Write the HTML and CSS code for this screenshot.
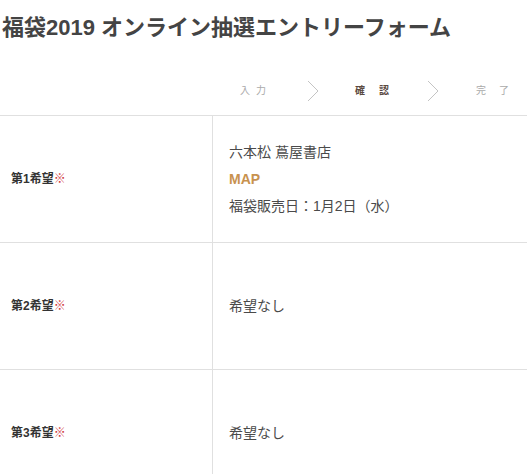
FILE: index.html
```html
<!DOCTYPE html>
<html lang="ja">
<head>
<meta charset="utf-8">
<title>福袋2019 オンライン抽選エントリーフォーム</title>
<link rel="stylesheet" href="styles.css">
</head>
<body>
<h1 class="title">福袋2019 オンライン抽選エントリーフォーム</h1>
<div class="steps">
  <span class="step step-input">入力</span>
  <svg class="chev chev-1" width="12" height="22" viewBox="0 0 12 22"><polyline points="1,1 11,11 1,21" fill="none" stroke="#c4c4c4" stroke-width="1"/></svg>
  <span class="step step-current">確認</span>
  <svg class="chev chev-2" width="12" height="22" viewBox="0 0 12 22"><polyline points="1,1 11,11 1,21" fill="none" stroke="#c4c4c4" stroke-width="1"/></svg>
  <span class="step step-done">完了</span>
</div>
<div class="entries">
  <div class="row">
    <div class="label">第1希望<span class="req">※</span></div>
    <div class="value">
      <div class="line">六本松 蔦屋書店</div>
      <div class="line map">MAP</div>
      <div class="line">福袋販売日：1月2日（水）</div>
    </div>
  </div>
  <div class="row">
    <div class="label">第2希望<span class="req">※</span></div>
    <div class="value">
      <div class="line">希望なし</div>
    </div>
  </div>
  <div class="row">
    <div class="label">第3希望<span class="req">※</span></div>
    <div class="value">
      <div class="line">希望なし</div>
    </div>
  </div>
</div>
</body>
</html>
```
FILE: styles.css
```css
html, body {
  margin: 0;
  padding: 0;
  background: #fff;
}
body {
  font-family: "Liberation Sans", Arial, "Noto Sans CJK JP", sans-serif;
  color: #444;
  width: 527px;
  overflow: hidden;
}
.title {
  margin: 0;
  padding: 16px 0 0 2px;
  font-size: 22px;
  line-height: 24px;
  font-weight: bold;
  color: #444;
  white-space: nowrap;
}
.steps {
  display: flex;
  align-items: center;
  height: 22px;
  margin-top: 40px;
  padding-left: 240px;
}
.step {
  font-size: 10px;
  line-height: 12px;
  color: #aaa;
  white-space: nowrap;
}
.step-input {
  letter-spacing: 6px;
}
.step-current {
  letter-spacing: 14px;
  color: #5b4a42;
  font-weight: bold;
  margin-left: 36px;
}
.step-done {
  letter-spacing: 13px;
  margin-left: 37px;
}
.chev {
  display: block;
  flex: none;
}
.chev-1 {
  margin-left: 35px;
}
.chev-2 {
  margin-left: 24px;
}
.entries {
  margin-top: 13px;
}
.row {
  display: grid;
  grid-template-columns: 212px 1fr;
  height: 127px;
  box-sizing: border-box;
  border-top: 1px solid #e0e0e0;
}
.label {
  display: flex;
  align-items: center;
  padding: 0 0 4px 11px;
  font-size: 12px;
  font-weight: bold;
  color: #333;
}
.req {
  color: #d0343a;
  font-weight: normal;
}
.value {
  display: flex;
  flex-direction: column;
  justify-content: center;
  padding-left: 16px;
  border-left: 1px solid #e0e0e0;
  font-size: 14px;
  color: #4a4a4a;
}
.line {
  line-height: 27px;
  white-space: nowrap;
}
.map {
  font-weight: bold;
  color: #c8924e;
  font-size: 14px;
}
```
